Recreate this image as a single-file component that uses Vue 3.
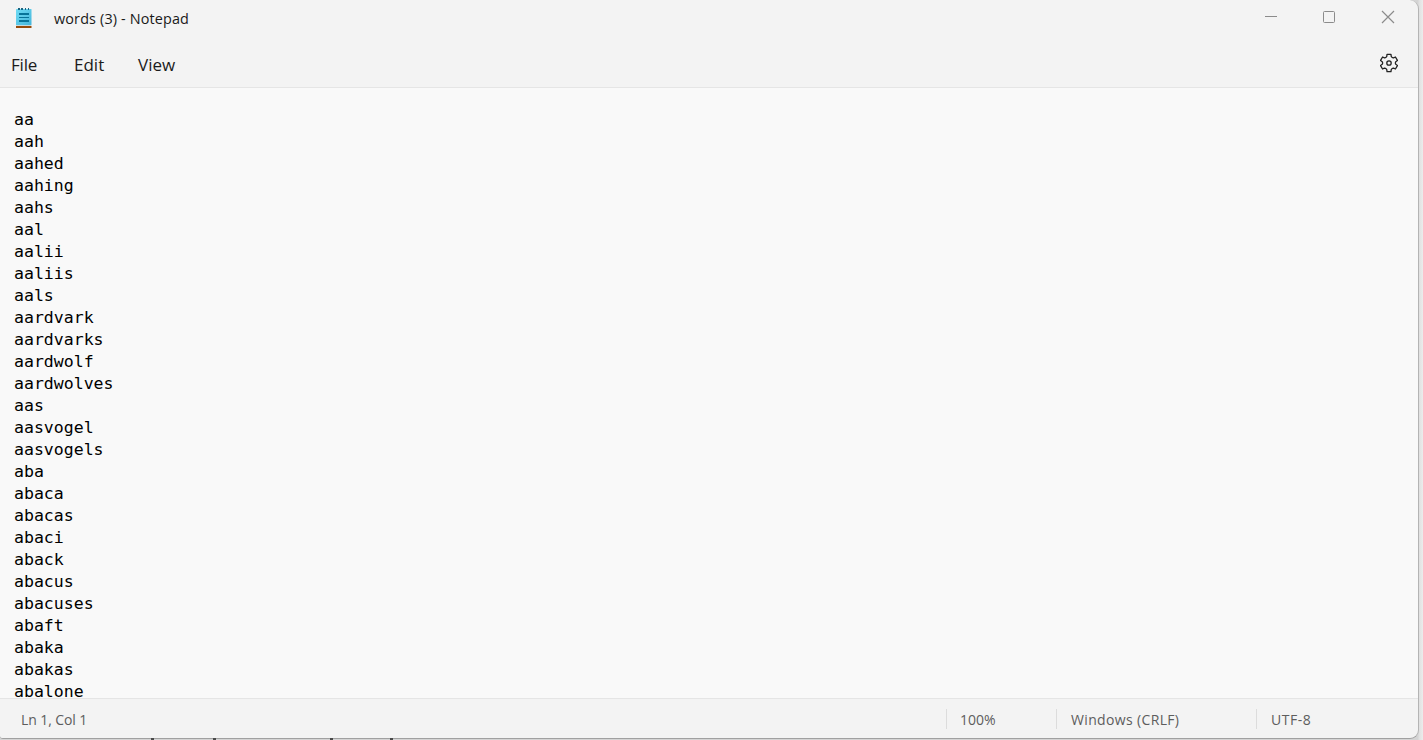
<!-- 记事本窗口 组件 -->

<template>
  <div class="desktop">
    <div class="window">
      <!-- 标题栏 -->
      <div class="title-bar">
        <svg class="app-icon" width="16" height="21" viewBox="0 0 16 21">
          <defs>
            <linearGradient id="paper" x1="0" y1="0" x2="1" y2="1">
              <stop offset="0" stop-color="#6fdcf5" />
              <stop offset="1" stop-color="#45b5da" />
            </linearGradient>
          </defs>
          <rect x="0" y="18" width="15.5" height="2" fill="#964a0b" />
          <rect x="0" y="17" width="15.5" height="1" fill="#e9e3df" />
          <rect x="0" y="1" width="15.5" height="16.2" rx="0.6" fill="url(#paper)" />
          <path d="M2 0h2v2H2zM5 0h2v2H5zM9 0h1v2H9zM12 0h1v2h-1z" fill="#1c6480" />
          <path d="M3 5h10v2H3zM3 9h10v1H3zM3 12h10v2H3z" fill="#087499" />
        </svg>
        <span class="title">words (3) - Notepad</span>
        <div class="controls">
          <svg width="14" height="14" viewBox="0 0 14 14">
            <path d="M1 6.5h12" />
          </svg>
          <svg width="14" height="14" viewBox="0 0 14 14">
            <rect x="1.5" y="1.5" width="11" height="11" rx="1" />
          </svg>
          <svg class="close" width="14" height="14" viewBox="0 0 14 14">
            <path d="M1 1l12 12M13 1L1 13" />
          </svg>
        </div>
      </div>
      <!-- 菜单栏 -->
      <div class="menu-bar">
        <span v-for="item in menus" :key="item" class="menu" :class="item.toLowerCase()">{{ item }}</span>
        <svg class="gear" width="20" height="20" viewBox="0 0 20 20">
          <path :d="gearPath" />
          <circle cx="10" cy="10" r="2.2" />
        </svg>
      </div>
      <!-- 文本内容 -->
      <div class="editor">
        <div v-for="word in words" :key="word" class="line">{{ word }}</div>
      </div>
      <!-- 状态栏 -->
      <div class="status-bar">
        <div class="cell position">Ln 1, Col 1</div>
        <div class="cell zoom">100%</div>
        <div class="cell eol">Windows (CRLF)</div>
        <div class="cell encoding">UTF-8</div>
      </div>
    </div>
    <!-- 窗口下方露出的文字边缘 -->
    <svg class="behind" width="400" height="2" viewBox="0 0 400 2">
      <path d="M151 1h3M213 1h3M330 1h3M390 1h3" />
    </svg>
  </div>
</template>

<script setup>
const menus = ['File', 'Edit', 'View'];

// 单词列表
const words = [
  'aa', 'aah', 'aahed', 'aahing', 'aahs', 'aal', 'aalii', 'aaliis', 'aals',
  'aardvark', 'aardvarks', 'aardwolf', 'aardwolves', 'aas', 'aasvogel',
  'aasvogels', 'aba', 'abaca', 'abacas', 'abaci', 'aback', 'abacus',
  'abacuses', 'abaft', 'abaka', 'abakas', 'abalone'
];

// 生成六齿齿轮的轮廓
function buildGear() {
  const offsets = [[-13, 8.8], [13, 8.8], [19, 6.9], [24, 6.5], [36, 6.5], [41, 6.9]]; // 每个齿的 [角度, 半径]
  const points = [];
  for (let i = 0; i < 6; i++) {
    for (const [angle, radius] of offsets) {
      const a = (i * 60 + angle) * Math.PI / 180;
      points.push((10 + radius * Math.sin(a)).toFixed(2) + ' ' + (10 - radius * Math.cos(a)).toFixed(2));
    }
  }
  return 'M' + points.join('L') + 'Z';
}

const gearPath = buildGear();
</script>

<style>
body {
  background: #e4e4e4;
}
</style>

<style scoped>
.desktop {
  position: relative;
  width: 1423px;
  height: 740px;
  overflow: hidden;
  background: linear-gradient(to right, #d4d4d4 1418px, #e0e0e0 1419px, #ececec 1423px);
  font-family: "Open Sans", "Noto Sans", sans-serif;
}

.window {
  display: flex;
  flex-direction: column;
  box-sizing: border-box;
  width: 1419px;
  height: 739px;
  border-right: 1px solid #b4b4b4;
  border-bottom: 1px solid #a0a0a0;
  border-radius: 0 9px 9px 3px;
  background: #f3f3f3;
  overflow: hidden;
}

.title-bar {
  display: flex;
  height: 40px;
  flex: none;
}

.app-icon {
  margin: 8px 0 0 16px;
}

.title {
  margin: 8px 0 0 22px;
  font-size: 14.4px;
  line-height: 22px;
  letter-spacing: 0.15px;
  color: #191919;
  white-space: nowrap;
}

.controls {
  display: flex;
  gap: 44px;
  margin: 10px 23px 0 auto;
}

.controls svg {
  fill: none;
  stroke: #8b8b8b;
  stroke-width: 1;
}

.controls .close {
  margin-left: 1px;
  stroke-width: 1.2;
}

.menu-bar {
  display: flex;
  align-items: flex-start;
  box-sizing: border-box;
  height: 48px;
  flex: none;
  padding: 12px 19px 0 11px;
  border-bottom: 1px solid #e5e5e5;
}

.menu {
  width: 64px;
  font-size: 17px;
  line-height: 26px;
  color: #1b1b1b;
}

.menu.file {
  width: 63px;
  letter-spacing: -0.2px;
}

.gear {
  margin: 1px 0 0 auto;
  fill: none;
  stroke: #222;
  stroke-width: 1.3;
  stroke-linejoin: round;
}

.editor {
  flex: 1;
  min-height: 0;
  padding: 21px 14px 0;
  background: #f9f9f9;
  font-family: "DejaVu Sans Mono", monospace;
  font-size: 16.55px;
  color: #000;
}

.line {
  height: 22px;
  line-height: 22px;
}

/* 最后一行紧贴状态栏 */
.line:last-child {
  height: 17px;
}

.status-bar {
  display: flex;
  align-items: center;
  box-sizing: border-box;
  height: 40px;
  flex: none;
  border-top: 1px solid #e5e5e5;
  font-size: 14px;
  color: #5d5d5d;
}

.cell {
  box-sizing: border-box;
  height: 20px;
  line-height: 22px;
  padding-left: 14px;
  border-left: 1px solid #dcdcdc;
  white-space: nowrap;
}

.position {
  width: 946px;
  padding-left: 21px;
  border-left: none;
  letter-spacing: -0.1px;
}

.zoom {
  width: 110px;
  padding-left: 13px;
}

.eol {
  width: 200px;
  letter-spacing: 0.35px;
}

.encoding {
  letter-spacing: 0.5px;
}

.behind {
  position: absolute;
  left: 0;
  bottom: 0;
  stroke: #4a4a4a;
  stroke-width: 2;
}
</style>
